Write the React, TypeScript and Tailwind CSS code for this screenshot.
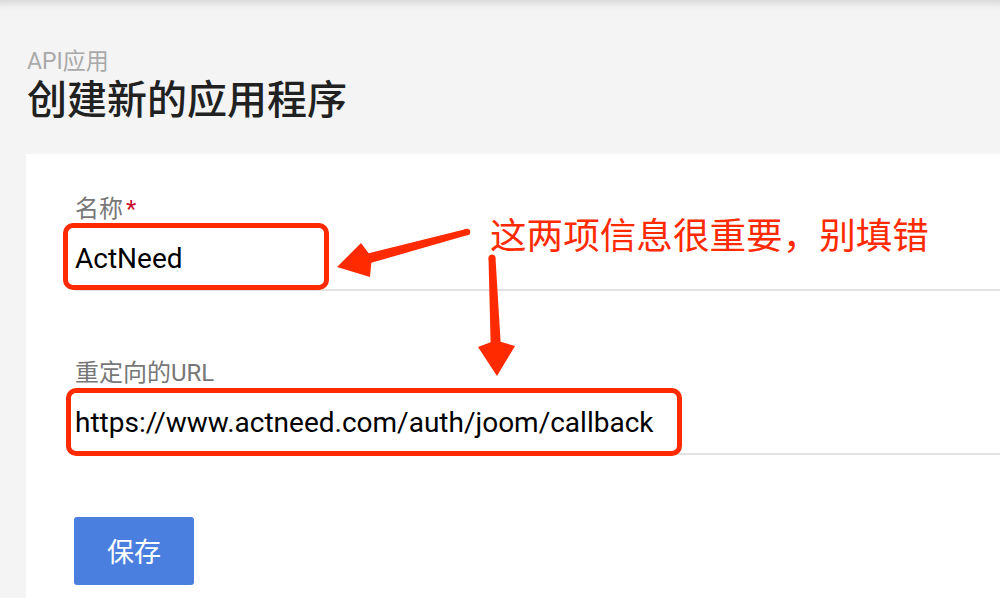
const latin = "font-['Roboto','Noto_Sans_CJK_SC',sans-serif]";
const cjk = "font-['Noto_Sans_CJK_SC','Noto_Sans',sans-serif]";

function Field({
  label,
  required,
  value,
  className,
}: {
  label: string;
  required?: boolean;
  value: string;
  className?: string;
}) {
  return (
    <div className={className}>
      <div className={`${latin} text-[24px] leading-[28px] text-[#777777]`}>
        {label}
        {required && <span className="ml-[3px] text-[#c8102e]">*</span>}
      </div>
      <div className="border-b-2 border-[#e2e2e2]">
        <div className={`${latin} text-[28px] leading-[36px] text-black mt-[18px] pb-[12px]`}>
          {value}
        </div>
      </div>
    </div>
  );
}

function Arrows() {
  return (
    <svg
      className="absolute inset-0 pointer-events-none"
      width="1000"
      height="598"
      viewBox="0 0 1000 598"
    >
      <g fill="#ff2a00">
        {/* arrow to the name field */}
        <circle cx="467" cy="232" r="3.2" />
        <polygon points="466.2,229 368.7,253.2 361,243 337,267 370,277 371.3,262.8 467.8,235" />
        {/* arrow down to the redirect url */}
        <circle cx="492" cy="258" r="3.5" />
        <polygon points="488.5,258 490.6,342.2 478,347 497,376 515,346 500.6,341.8 495.5,258" />
      </g>
    </svg>
  );
}

export default function App() {
  return (
    <div className="relative flex h-[598px] w-[1000px] flex-col overflow-hidden bg-[#f4f4f4] shadow-[inset_0_10px_10px_-8px_rgba(0,0,0,0.16)]">
      {/* Header */}
      <div className="pl-[27px] pt-[50px]">
        <div className={`${latin} text-[23px] leading-[24px] text-[#a9a9a9]`}>API应用</div>
        <h1 className={`${cjk} mt-[3px] text-[40px] leading-[40px] font-medium text-[#212121]`}>
          创建新的应用程序
        </h1>
      </div>

      {/* Form card */}
      <div className="mt-[37px] ml-[26px] flex-1 bg-white pl-[49px] pt-[41px]">
        <Field label="名称" required value="ActNeed" />
        <Field
          className="mt-[68px]"
          label="重定向的URL"
          value="https://www.actneed.com/auth/joom/callback"
        />
        <button
          className={`${cjk} mt-[62px] -ml-px flex h-[68px] w-[120px] items-center justify-center rounded-[3px] bg-[#4a7fe0] text-[27px] text-white`}
        >
          保存
        </button>
      </div>

      {/* Annotations */}
      <div className="absolute left-[63px] top-[223px] h-[67px] w-[266px] rounded-[10px] border-[5px] border-[#ff2a00]" />
      <div className="absolute left-[66px] top-[388px] h-[68px] w-[616px] rounded-[10px] border-[5px] border-[#ff2a00]" />
      <div className={`${cjk} absolute left-[490px] top-[215px] text-[36.6px] leading-[37px] text-[#ff2a00]`}>
        这两项信息很重要，别填错
      </div>
      <Arrows />
    </div>
  );
}
